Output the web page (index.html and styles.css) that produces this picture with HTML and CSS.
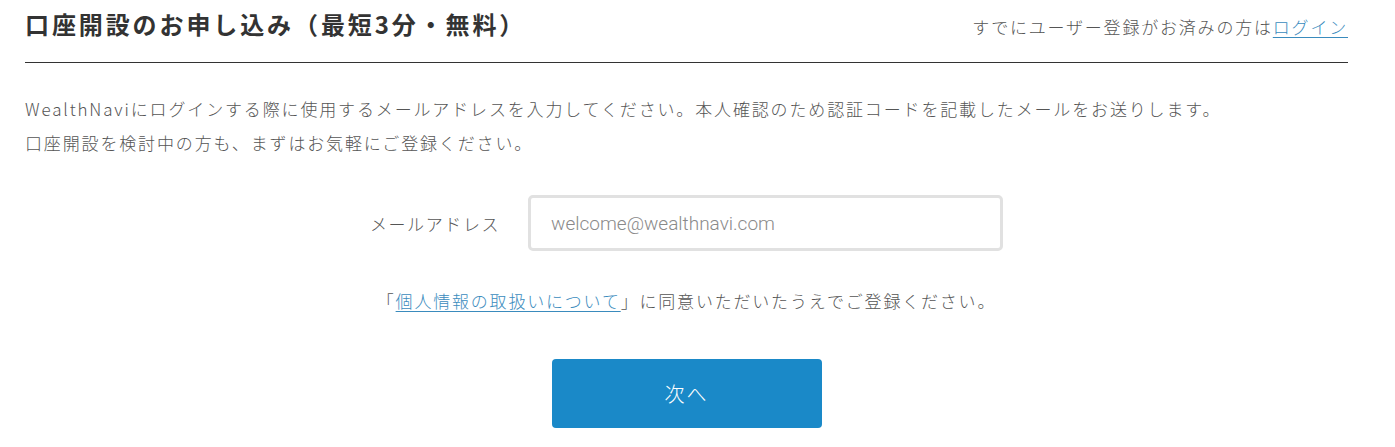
FILE: index.html
```html
<!DOCTYPE html>
<html lang="ja">
<head>
<meta charset="utf-8">
<title>口座開設のお申し込み</title>
<link rel="stylesheet" href="styles.css">
</head>
<body>
<div class="page">
  <header class="header">
    <h1 class="title">口座開設のお申し込み（最短3分・無料）</h1>
    <p class="login-note">すでにユーザー登録がお済みの方は<a href="#" class="link">ログイン</a></p>
  </header>
  <p class="lead">WealthNaviにログインする際に使用するメールアドレスを入力してください。本人確認のため認証コードを記載したメールをお送りします。<br>口座開設を検討中の方も、まずはお気軽にご登録ください。</p>
  <form class="form">
    <div class="field">
      <label class="label" for="email">メールアドレス</label>
      <input class="input" id="email" type="email" placeholder="welcome@wealthnavi.com">
    </div>
    <p class="consent">「<a href="#" class="link">個人情報の取扱いについて</a>」に同意いただいたうえでご登録ください。</p>
    <button class="button" type="button">次へ</button>
  </form>
</div>
</body>
</html>
```
FILE: styles.css
```css
* { box-sizing: border-box; }
html, body { margin: 0; padding: 0; background: #fff; }
body {
  font-family: "Noto Sans CJK JP", "Noto Sans", sans-serif;
  color: #555;
}
.page {
  width: 1323px;
  margin-left: 25px;
}
.header {
  display: flex;
  justify-content: space-between;
  align-items: baseline;
  padding: 6px 0 20px;
  height: 63px;
  border-bottom: 1px solid #333;
}
.title {
  margin: 0;
  font-size: 24px;
  line-height: 36px;
  font-weight: 700;
  color: #333;
  letter-spacing: 2.9px;
}
.login-note {
  margin: 0;
  font-size: 17px;
  line-height: 24px;
  font-weight: 300;
  letter-spacing: 1.8px;
  color: #555;
}
.link {
  color: #3a8bbd;
  text-decoration: underline;
  text-underline-offset: 3px;
}
.lead {
  margin: 29px 0 0;
  font-size: 17px;
  line-height: 34px;
  font-weight: 300;
  letter-spacing: 1.85px;
}
.form {
  display: flex;
  flex-direction: column;
  align-items: center;
}
.field {
  display: flex;
  align-items: center;
  gap: 28px;
  margin-top: 35px;
}
.label {
  font-size: 17px;
  font-weight: 300;
  letter-spacing: 1.6px;
  color: #555;
}
.input {
  width: 475px;
  height: 56px;
  border: 3px solid #e1e1e1;
  border-radius: 5px;
  padding: 0 20px;
  font-family: "Roboto", "Noto Sans CJK JP", sans-serif;
  font-size: 19px;
  font-weight: 300;
  color: #555;
  outline: none;
}
.input::placeholder { color: #8a8a8a; }
.consent {
  margin: 38px 0 0;
  font-size: 17px;
  line-height: 24px;
  font-weight: 300;
  letter-spacing: 1.8px;
}
.button {
  margin-top: 46px;
  width: 270px;
  height: 69px;
  border: none;
  border-radius: 4px;
  background: #1a89c8;
  color: #fff;
  font-family: "Noto Sans CJK JP", sans-serif;
  font-size: 20px;
  font-weight: 300;
  letter-spacing: 2px;
  cursor: pointer;
}
```
